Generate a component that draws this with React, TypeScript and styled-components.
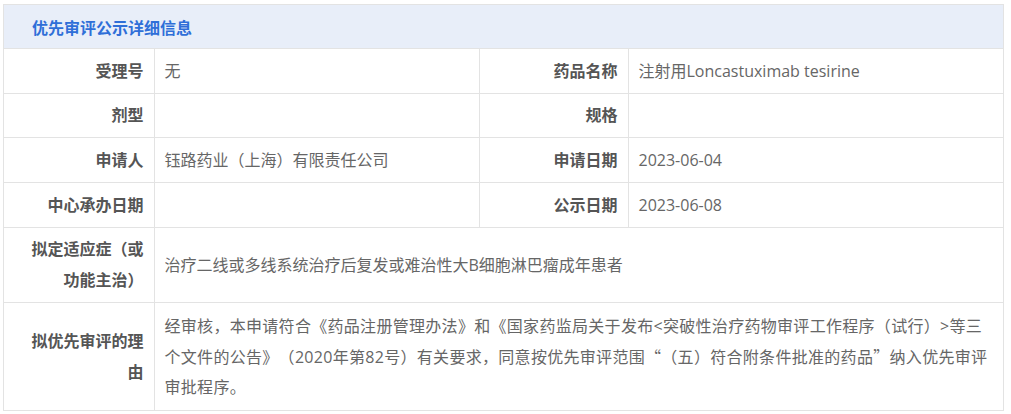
import React from 'react';
import styled, { createGlobalStyle } from 'styled-components';

const GlobalStyle = createGlobalStyle`
  html, body {
    margin: 0;
    padding: 0;
    background: #ffffff;
  }
  body {
    font-family: "Open Sans", "Noto Sans CJK SC", sans-serif;
    text-spacing-trim: space-all;
  }
`;

const Page = styled.div`
  padding: 4px 0 0 3px;`;

const Panel = styled.div`
  width: 1001px;
  box-sizing: border-box;
  border: 1px solid #e3e3e3;
  border-bottom: none;`;

const PanelHeader = styled.div`
  height: 43px;
  display: flex;
  align-items: center;
  padding-left: 28px;
  background: #e8eef9;
  color: #2f6fd8;
  font-size: 16px;
  font-weight: bold;`;

const InfoTable = styled.table`
  width: 100%;
  table-layout: fixed;
  border-collapse: collapse;
  font-size: 16px;`;

const Row = styled.tr<{ $h?: number }>`
  height: ${p => p.$h ?? 45}px;`;

const Label = styled.th`
  border: 1px solid #e3e3e3;
  border-left: none;
  padding: 6px 10px 6px 20px;
  text-align: right;
  font-weight: bold;
  color: #555555;
  line-height: 31px;
  vertical-align: middle;`;

const Value = styled.td<{ $wide?: boolean }>`
  border: 1px solid #e3e3e3;
  padding: 6px ${p => (p.$wide ? 14 : 10)}px 6px 10px;
  text-align: left;
  color: #666666;
  line-height: 30px;
  letter-spacing: ${p => (p.$wide ? '0.3px' : 'normal')};
  vertical-align: middle;
  &:last-child {
    border-right: none;
  }`;

// full-width curly quotes, as the CJK font draws them
const Quote = styled.span`
  font-family: "Noto Sans CJK SC", sans-serif;
  font-feature-settings: "fwid";`;

export default function App() {
  return (
    <Page>
      <GlobalStyle />
      <Panel>
        <PanelHeader>优先审评公示详细信息</PanelHeader>
        <InfoTable>
          <colgroup>
            <col style={{ width: 150 }} />
            <col style={{ width: 325 }} />
            <col style={{ width: 149 }} />
            <col />
          </colgroup>
          <tbody>
            <Row>
              <Label>受理号</Label>
              <Value>无</Value>
              <Label>药品名称</Label>
              <Value>注射用Loncastuximab tesirine</Value>
            </Row>
            <Row $h={44}>
              <Label>剂型</Label>
              <Value></Value>
              <Label>规格</Label>
              <Value></Value>
            </Row>
            <Row>
              <Label>申请人</Label>
              <Value>钰路药业（上海）有限责任公司</Value>
              <Label>申请日期</Label>
              <Value>2023-06-04</Value>
            </Row>
            <Row>
              <Label>中心承办日期</Label>
              <Value></Value>
              <Label>公示日期</Label>
              <Value>2023-06-08</Value>
            </Row>
            <Row $h={75}>
              <Label>拟定适应症（或功能主治）</Label>
              <Value colSpan={3}>治疗二线或多线系统治疗后复发或难治性大B细胞淋巴瘤成年患者</Value>
            </Row>
            <Row $h={108}>
              <Label>拟优先审评的理由</Label>
              <Value colSpan={3} $wide>
                经审核，本申请符合《药品注册管理办法》和《国家药监局关于发布&lt;突破性治疗药物审评工作程序（试行）&gt;等三个文件的公告》（2020年第82号）有关要求，同意按优先审评范围<Quote>“</Quote>（五）符合附条件批准的药品<Quote>”</Quote>纳入优先审评审批程序。
              </Value>
            </Row>
          </tbody>
        </InfoTable>
      </Panel>
    </Page>
  );
}
